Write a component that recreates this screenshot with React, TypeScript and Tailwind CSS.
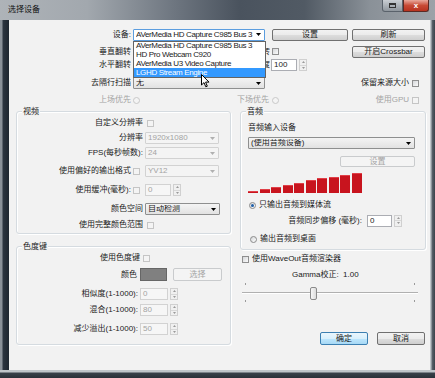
import React from "react";

type Kids = { children?: React.ReactNode; className?: string };

function Check({ disabled = false, className = "" }: { disabled?: boolean; className?: string }) {
  return (
    <span
      className={`block shrink-0 w-[7px] h-[7px] border ${
        disabled
          ? "border-[#c5c5c5] bg-[#f4f4f4]"
          : "border-[#8f8f8f] bg-[linear-gradient(135deg,#d6d8da,#fbfbfb)]"
      } ${className}`}
    />
  );
}

function Radio({ checked = false, disabled = false, className = "" }: { checked?: boolean; disabled?: boolean; className?: string }) {
  return (
    <span
      className={`flex shrink-0 items-center justify-center w-[7px] h-[7px] rounded-full border ${
        disabled
          ? "border-[#c8c8c8] bg-[#f4f4f4]"
          : "border-[#8a8a8a] bg-[linear-gradient(135deg,#d6d8da,#fdfdfd)]"
      } ${className}`}
    >
      {checked && <span className="block w-[3px] h-[3px] rounded-full bg-[#1f5fa8]" />}
    </span>
  );
}

function Caret({ disabled = false }: { disabled?: boolean }) {
  return (
    <svg width="5" height="3" viewBox="0 0 5 3" className="shrink-0">
      <path d="M0 0H5L2.5 3Z" fill={disabled ? "#b0b0b0" : "#000"} />
    </svg>
  );
}

function Select({
  value,
  disabled = false,
  focus = false,
  className = "",
}: {
  value: string;
  disabled?: boolean;
  focus?: boolean;
  className?: string;
}) {
  const box = focus
    ? "border-[#5b9ddf] bg-white"
    : disabled
    ? "border-[#d2d2d2] bg-[#f4f4f4] text-[#a3a3a3]"
    : "border-[#8e8f8f] bg-[linear-gradient(180deg,#f4f4f4,#e2e2e2)]";
  return (
    <div className={`flex shrink-0 items-center h-[12px] border rounded-[1px] pl-[2px] pr-[3px] ${box} ${className}`}>
      <span className="flex-1 overflow-hidden whitespace-nowrap">{value}</span>
      <Caret disabled={disabled} />
    </div>
  );
}

function Spin({
  value,
  disabled = false,
  field = "w-[26px]",
  className = "",
}: {
  value: string;
  disabled?: boolean;
  field?: string;
  className?: string;
}) {
  const c = disabled ? "border-[#d2d2d2] bg-[#f6f6f6] text-[#a3a3a3]" : "border-[#abadb3] bg-white";
  return (
    <div className={`flex shrink-0 items-center gap-[2px] ${className}`}>
      <div className={`flex items-center h-[12px] border pl-[2px] ${c} ${field}`}>{value}</div>
      <div className="flex flex-col w-[8px] h-[12px] border border-[#d0d0d0] bg-[#f0f0f0]">
        <span className="flex flex-1 items-center justify-center">
          <svg width="3" height="2" viewBox="0 0 3 2">
            <path d="M0 2H3L1.5 0Z" fill="#9a9a9a" />
          </svg>
        </span>
        <span className="flex flex-1 items-center justify-center border-t border-[#d8d8d8]">
          <svg width="3" height="2" viewBox="0 0 3 2">
            <path d="M0 0H3L1.5 2Z" fill="#9a9a9a" />
          </svg>
        </span>
      </div>
    </div>
  );
}

function Btn({ children, className = "", disabled = false, primary = false }: Kids & { disabled?: boolean; primary?: boolean }) {
  const s = primary
    ? "border-[#3c7fb1] bg-[linear-gradient(180deg,#eaf6fd_0%,#d9f0fc_50%,#bee6fd_51%,#a7d9f5_100%)]"
    : disabled
    ? "border-[#c9cbcd] bg-[#f4f4f4] text-[#a3a3a3]"
    : "border-[#707070] bg-[linear-gradient(180deg,#f2f2f2_0%,#ebebeb_50%,#dddddd_51%,#cfcfcf_100%)]";
  return (
    <div className={`flex shrink-0 items-center justify-center border rounded-[2px] ${s} ${className}`}>{children}</div>
  );
}

function Group({ title, children, className = "" }: Kids & { title: string }) {
  return (
    <div className={`relative flex flex-col border border-[#d5dbe0] rounded-[3px] shadow-[inset_1px_1px_0_#fff,1px_1px_0_#fff] ${className}`}>
      <span className="absolute left-[5px] top-[-5px] px-[1px] bg-[#f2f2f2] leading-[9px]">{title}</span>
      {children}
    </div>
  );
}

const bars = [2, 4, 6, 8, 10, 13, 15, 16, 18, 20];

export default function App() {
  return (
    <div className="w-[435px] h-[378px] flex flex-col bg-[#3b444e] text-[8px] leading-none text-[#1a1a1a] font-['Liberation_Sans','Noto_Sans_CJK_SC',sans-serif] relative overflow-hidden">
      {/* title bar */}
      <div className="h-[20px] shrink-0 flex items-start bg-[linear-gradient(90deg,#aeb3b8_0%,#a2a8ae_20%,#6e7680_40%,#4a535e_55%,#515a64_70%,#8a9198_85%,#9ca2a8_100%)]">
        <span className="ml-[8px] mt-[6px] text-[#111]">选择设备</span>
        <div className="ml-auto mr-[6px] flex">
          <div className="w-[21px] h-[12px] flex items-center justify-center rounded-bl-[3px] border border-t-0 border-[#5a626b] bg-[linear-gradient(180deg,#c9ced3,#8f969d)]">
            <span className="block w-[7px] h-[5px] border border-[#333] border-t-2" />
          </div>
          <div className="w-[26px] h-[12px] flex items-center justify-center rounded-br-[3px] border border-t-0 border-[#5a2a25] bg-[linear-gradient(180deg,#e9a99c,#c74a35_50%,#b8321f)] text-white text-[8px] font-bold">
            x
          </div>
        </div>
      </div>

      <div className="flex flex-1">
        <div className="w-[9px] bg-[linear-gradient(90deg,#8a9199_0,#8a9199_2px,#2c3540_3px,#1e2630_100%)]" />

        {/* content */}
        <div className="w-[421px] h-[350px] bg-[#f2f2f2] flex flex-col">
          <div className="flex items-center h-[13px] mt-[8px]">
            <span className="w-[122px] text-right">设备:</span>
            <Select
              className="ml-[2px] w-[132px] tracking-[-0.35px]"
              focus
              value="AVerMedia HD Capture C985 Bus 3"
            />
            <Btn className="ml-[7px] w-[76px] h-[12px]">设置</Btn>
            <Btn className="ml-[4px] w-[73px] h-[12px]">刷新</Btn>
          </div>

          <div className="flex items-center h-[13px] mt-[4px]">
            <span className="w-[122px] text-right">垂直翻转</span>
            <span className="ml-[134px] w-[5px] overflow-hidden flex justify-end">转</span>
            <Check className="ml-[2px]" />
            <Btn className="ml-[73px] w-[73px] h-[12px]">开启Crossbar</Btn>
          </div>

          <div className="flex items-center h-[14px]">
            <span className="w-[122px] text-right">水平翻转</span>
            <span className="ml-[134px] w-[5px] overflow-hidden flex justify-end">度</span>
            <Spin className="ml-[1px]" value="100" />
          </div>

          <div className="flex items-center h-[14px] mt-[4px]">
            <span className="w-[122px] text-right">去隔行扫描</span>
            <Select className="ml-[2px] w-[132px]" value="无" />
            <span className="ml-auto">保留来源大小</span>
            <Check className="ml-[3px] mr-[11px]" />
          </div>

          <div className="flex items-center h-[10px] mt-[5px] text-[#a3a3a3]">
            <span className="w-[122px] text-right">上场优先</span>
            <Radio className="ml-[2px]" disabled />
            <span className="ml-[97px]">下场优先</span>
            <Radio className="ml-[3px]" disabled />
            <span className="ml-auto">使用GPU</span>
            <Check className="ml-[3px] mr-[11px]" disabled />
          </div>

          <div className="flex mt-[6px]">
            {/* left column */}
            <div className="ml-[7px] w-[215px] flex flex-col">
              <Group title="视频" className="h-[123px]">
                <div className="flex items-center h-[12px] mt-[5px]">
                  <span className="w-[126px] text-right">自定义分辨率</span>
                  <Check className="ml-[4px]" disabled />
                </div>
                <div className="flex items-center h-[12px] mt-[3px]">
                  <span className="w-[126px] text-right">分辨率</span>
                  <Select className="ml-[2px] w-[74px]" disabled value="1920x1080" />
                </div>
                <div className="flex items-center h-[12px] mt-[3px]">
                  <span className="w-[126px] text-right">FPS(每秒帧数):</span>
                  <Select className="ml-[2px] w-[74px]" disabled value="24" />
                </div>
                <div className="flex items-center h-[12px] mt-[6px]">
                  <span className="w-[126px] flex items-center justify-end">
                    使用偏好的输出格式
                    <Check className="ml-[2px] mr-[3px]" disabled />
                  </span>
                  <Select className="ml-[2px] w-[74px]" disabled value="YV12" />
                </div>
                <div className="flex items-center h-[12px] mt-[7px]">
                  <span className="w-[126px] flex items-center justify-end">
                    使用缓冲(毫秒):
                    <Check className="ml-[2px] mr-[3px]" disabled />
                  </span>
                  <Spin className="ml-[2px]" field="w-[26px]" disabled value="0" />
                </div>
                <div className="flex items-center h-[12px] mt-[7px]">
                  <span className="w-[126px] text-right">颜色空间</span>
                  <Select className="ml-[2px] w-[75px]" value="自动检测" />
                </div>
                <div className="flex items-center h-[12px] mt-[4px]">
                  <span className="w-[126px] text-right">使用完整颜色范围</span>
                  <Check className="ml-[4px]" disabled />
                </div>
              </Group>

              <Group title="色度键" className="mt-[12px] h-[99px]">
                <div className="flex items-center h-[12px] mt-[5px]">
                  <span className="w-[123px] text-right">使用色度键</span>
                  <Check className="ml-[3px]" disabled />
                </div>
                <div className="flex items-center h-[13px] mt-[4px]">
                  <span className="w-[120px] text-right">颜色</span>
                  <span className="ml-[3px] w-[27px] h-[13px] border border-[#666] bg-[#808080]" />
                  <Btn disabled className="ml-[6px] w-[49px] h-[13px]">
                    选择
                  </Btn>
                </div>
                <div className="flex items-center h-[12px] mt-[7px]">
                  <span className="w-[121px] text-right">相似度(1-1000):</span>
                  <Spin className="ml-[2px]" field="w-[28px]" disabled value="0" />
                </div>
                <div className="flex items-center h-[12px] mt-[4px]">
                  <span className="w-[121px] text-right">混合(1-1000):</span>
                  <Spin className="ml-[2px]" field="w-[28px]" disabled value="80" />
                </div>
                <div className="flex items-center h-[12px] mt-[7px]">
                  <span className="w-[121px] text-right">减少溢出(1-1000):</span>
                  <Spin className="ml-[2px]" field="w-[28px]" disabled value="50" />
                </div>
              </Group>
            </div>

            {/* right column */}
            <div className="ml-[9px] w-[186px] flex flex-col">
              <Group title="音频" className="h-[139px] pl-[7px] pr-[10px]">
                <div className="flex items-center h-[12px] mt-[10px]">音频输入设备</div>
                <Select className="mt-[3px] w-full" value="(使用音频设备)" />
                <Btn disabled className="mt-[7px] self-end w-[75px] h-[11px]">
                  设置
                </Btn>
                <div className="mt-[6px] h-[20px] flex items-end gap-[1.5px]">
                  {bars.map((h, i) => (
                    <span
                      key={i}
                      className="block w-[10px] bg-[#c8141e] border-t border-[#e04048]"
                      style={{ height: h }}
                    />
                  ))}
                </div>
                <div className="flex items-center h-[10px] mt-[7px]">
                  <Radio checked className="ml-[1px]" />
                  <span className="ml-[3px]">只输出音频到媒体流</span>
                </div>
                <div className="flex items-center h-[13px] mt-[4px]">
                  <span className="w-[114px] text-right">音频同步偏移 (毫秒):</span>
                  <Spin className="ml-[5px]" field="w-[25px]" value="0" />
                </div>
                <div className="flex items-center h-[10px] mt-[7px]">
                  <Radio className="ml-[2px]" />
                  <span className="ml-[3px]">输出音频到桌面</span>
                </div>
              </Group>

              <div className="flex items-center h-[10px] mt-[4px]">
                <Check className="ml-[2px]" />
                <span className="ml-[3px]">使用WaveOut音频渲染器</span>
              </div>
              <div className="flex items-center h-[10px] mt-[6px]">
                <span className="ml-[52px]">Gamma校正:&nbsp;&nbsp;1.00</span>
              </div>

              {/* slider */}
              <div className="relative mt-[3px] h-[19px] ml-[2px] w-[176px]">
                <span className="absolute left-[3px] top-0 w-px h-[2px] bg-[#9a9a9a]" />
                <span className="absolute right-[3px] top-0 w-px h-[2px] bg-[#9a9a9a]" />
                <span className="absolute left-[3px] bottom-0 w-px h-[2px] bg-[#9a9a9a]" />
                <span className="absolute right-[3px] bottom-0 w-px h-[2px] bg-[#9a9a9a]" />
                <span className="absolute left-0 right-0 top-[9px] h-[2px] border-t border-b border-t-[#b0b0b0] border-b-white bg-[#e4e4e4]" />
                <span className="absolute left-[68px] top-[4px] w-[7px] h-[13px] rounded-[2px] border border-[#8a8a8a] bg-[linear-gradient(90deg,#f7f7f7,#dcdcdc)]" />
              </div>

              <div className="flex items-center h-[13px] mt-[30px]">
                <Btn primary className="ml-[80px] w-[48px] h-[13px]">
                  确定
                </Btn>
                <Btn className="ml-[9px] w-[48px] h-[13px]">取消</Btn>
              </div>
            </div>
          </div>
        </div>

        <div className="w-[5px] bg-[linear-gradient(90deg,#c0c5ca_0,#c0c5ca_1px,#5b636c_2px,#3a424b_100%)]" />
      </div>
      <div className="h-[8px] shrink-0 bg-[linear-gradient(180deg,#c0c5ca_0,#c0c5ca_2px,#39414a_3px,#2a3139_100%)]" />

      {/* open dropdown list */}
      <div className="absolute left-[133px] top-[41px] w-[133px] h-[37px] border border-[#646464] bg-white flex flex-col z-10 tracking-[-0.35px]">
        <span className="h-[9px] flex items-center pl-[2px]">AVerMedia HD Capture C985 Bus 3</span>
        <span className="h-[9px] flex items-center pl-[2px]">HD Pro Webcam C920</span>
        <span className="h-[9px] flex items-center pl-[2px]">AVerMedia U3 Video Capture</span>
        <span className="h-[9px] flex items-center pl-[2px] bg-[#3399ff] text-white">LGHD Stream Engine</span>
      </div>
      <svg className="absolute left-[201px] top-[74px] z-20" width="9" height="14" viewBox="0 0 9 14">
        <path d="M0.5 0.5V11L3 8.6L4.8 12.8L6.3 12.2L4.6 8.1H8Z" fill="#fff" stroke="#000" strokeWidth="1" strokeLinejoin="round" />
      </svg>
    </div>
  );
}
